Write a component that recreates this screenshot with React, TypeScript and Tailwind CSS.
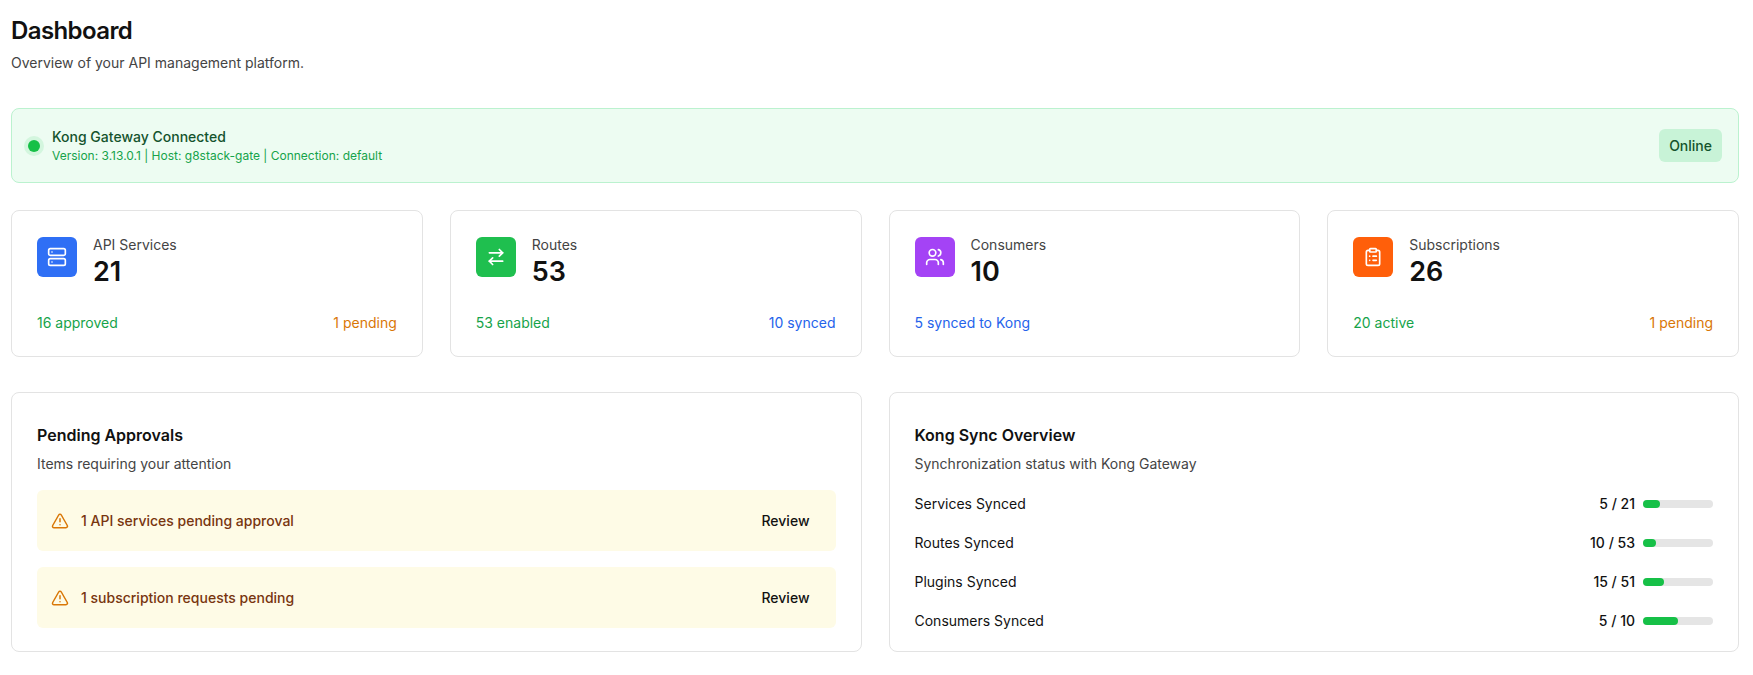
import { Server, ArrowRightLeft, Users, ClipboardList, TriangleAlert } from 'lucide-react';

const stats = [
  { label: 'API Services', value: '21', icon: Server, bg: 'bg-[#2f6ff5]', left: '16 approved', leftC: 'text-[#16a34a]', right: '1 pending', rightC: 'text-[#d97706]' },
  { label: 'Routes', value: '53', icon: ArrowRightLeft, bg: 'bg-[#1fbf4f]', left: '53 enabled', leftC: 'text-[#16a34a]', right: '10 synced', rightC: 'text-[#2563eb]' },
  { label: 'Consumers', value: '10', icon: Users, bg: 'bg-[#a443f5]', left: '5 synced to Kong', leftC: 'text-[#2563eb]', right: '', rightC: '' },
  { label: 'Subscriptions', value: '26', icon: ClipboardList, bg: 'bg-[#ff5f0a]', left: '20 active', leftC: 'text-[#16a34a]', right: '1 pending', rightC: 'text-[#d97706]' },
];

const sync = [
  { label: 'Services Synced', a: 5, b: 21 },
  { label: 'Routes Synced', a: 10, b: 53 },
  { label: 'Plugins Synced', a: 15, b: 51 },
  { label: 'Consumers Synced', a: 5, b: 10 },
];

export default function App() {
  return (
    <div className="min-h-[675px] bg-white pl-[11px] pr-[14px] pt-[16px] font-[Inter,sans-serif] text-[#111]">
      <h1 className="text-[24px] font-semibold leading-[30px] tracking-tight">Dashboard</h1>
      <p className="mt-[6px] text-[14px] text-[#444]">Overview of your API management platform.</p>

      <div className="mt-[35px] flex h-[75px] items-center justify-between rounded-lg border border-[#bbf2cf] bg-[#edfcf2] px-[16px]">
        <div className="flex items-center gap-[12px]">
          <span className="h-[12px] w-[12px] rounded-full bg-[#16c047] ring-4 ring-[#d3f6de]" />
          <div>
            <div className="text-[14px] font-medium text-[#14532d]">Kong Gateway Connected</div>
            <div className="text-[12px] text-[#16a34a]">Version: 3.13.0.1 | Host: g8stack-gate | Connection: default</div>
          </div>
        </div>
        <span className="rounded-md bg-[#c8f3d7] px-[10px] py-[6px] text-[14px] font-medium text-[#14532d]">Online</span>
      </div>

      <div className="mt-[27px] grid grid-cols-4 gap-[27px]">
        {stats.map((s) => (
          <div key={s.label} className="h-[147px] rounded-lg border border-[#e3e3e3] px-[25px] pt-[26px]">
            <div className="flex items-start gap-[16px]">
              <div className={`flex h-[40px] w-[40px] items-center justify-center rounded-md ${s.bg}`}>
                <s.icon className="h-[20px] w-[20px] text-white" strokeWidth={2} />
              </div>
              <div>
                <div className="text-[14px] leading-[16px] text-[#444]">{s.label}</div>
                <div className="mt-[3px] text-[27px] font-semibold leading-[32px]">{s.value}</div>
              </div>
            </div>
            <div className="mt-[24px] flex justify-between text-[14px]">
              <span className={s.leftC}>{s.left}</span>
              <span className={s.rightC}>{s.right}</span>
            </div>
          </div>
        ))}
      </div>

      <div className="mt-[35px] grid grid-cols-2 gap-[27px]">
        <div className="h-[260px] rounded-lg border border-[#e3e3e3] px-[25px] pt-[30px]">
          <div className="text-[16px] font-semibold">Pending Approvals</div>
          <div className="mt-[6px] text-[14px] text-[#444]">Items requiring your attention</div>
          <div className="mt-[16px] flex flex-col gap-[16px]">
            {['1 API services pending approval', '1 subscription requests pending'].map((t) => (
              <div key={t} className="flex h-[61px] items-center justify-between rounded-md bg-[#fefbe6] pl-[14px] pr-[26px]">
                <div className="flex items-center gap-[12px]">
                  <TriangleAlert className="h-[18px] w-[18px] text-[#d97706]" />
                  <span className="text-[14px] font-medium text-[#78350f]">{t}</span>
                </div>
                <span className="text-[14px] font-medium">Review</span>
              </div>
            ))}
          </div>
        </div>
        <div className="h-[260px] rounded-lg border border-[#e3e3e3] px-[25px] pt-[30px]">
          <div className="text-[16px] font-semibold">Kong Sync Overview</div>
          <div className="mt-[6px] text-[14px] text-[#444]">Synchronization status with Kong Gateway</div>
          <div className="mt-[10px] flex flex-col">
            {sync.map((r) => (
              <div key={r.label} className="flex h-[39px] items-center justify-between text-[14px]">
                <span>{r.label}</span>
                <div className="flex items-center gap-[8px]">
                  <span className="font-medium">{r.a} / {r.b}</span>
                  <div className="h-[8px] w-[70px] rounded-full bg-[#e5e5e5]">
                    <div className="h-[8px] rounded-full bg-[#16c047]" style={{ width: `${(r.a / r.b) * 100}%` }} />
                  </div>
                </div>
              </div>
            ))}
          </div>
        </div>
      </div>
    </div>
  );
}
